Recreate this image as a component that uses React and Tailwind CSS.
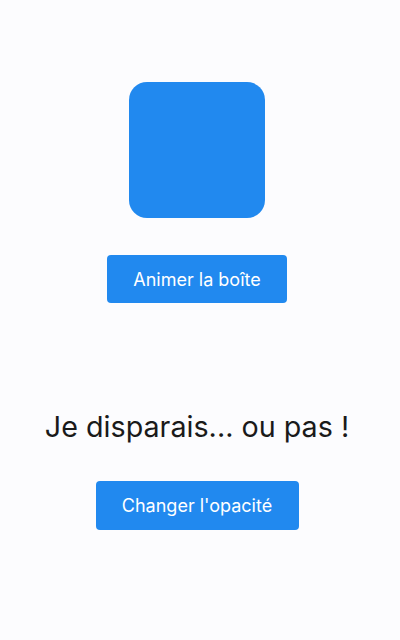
import React, { useState } from 'react';

export default function App() {
  const [moved, setMoved] = useState(false);
  const [visible, setVisible] = useState(true);

  return (
    <div
      className="min-h-[640px] w-[400px] bg-[#fcfcfe] flex flex-col items-center pr-[6px]"
      style={{ fontFamily: 'Inter, "Noto Sans", sans-serif' }}
    >
      <div className="mt-[82px] w-[136px] h-[136px] rounded-[18px] bg-[#2189ef]" />
      <button
        onClick={() => setMoved(!moved)}
        className="mt-[37px] w-[180px] h-[48px] rounded-[4px] bg-[#2189ef] text-white text-[18px]"
      >
        Animer la boîte
      </button>
      <p
        className={`mt-[104px] text-[28.7px] leading-[40px] text-[#1a1a1a] ${visible ? 'opacity-100' : 'opacity-0'}`}
      >
        Je disparais... ou pas !
      </p>
      <button
        onClick={() => setVisible(!visible)}
        className="mt-[34px] w-[203px] h-[49px] rounded-[4px] bg-[#2189ef] text-white text-[18px]"
      >
        Changer l'opacité
      </button>
    </div>
  );
}
